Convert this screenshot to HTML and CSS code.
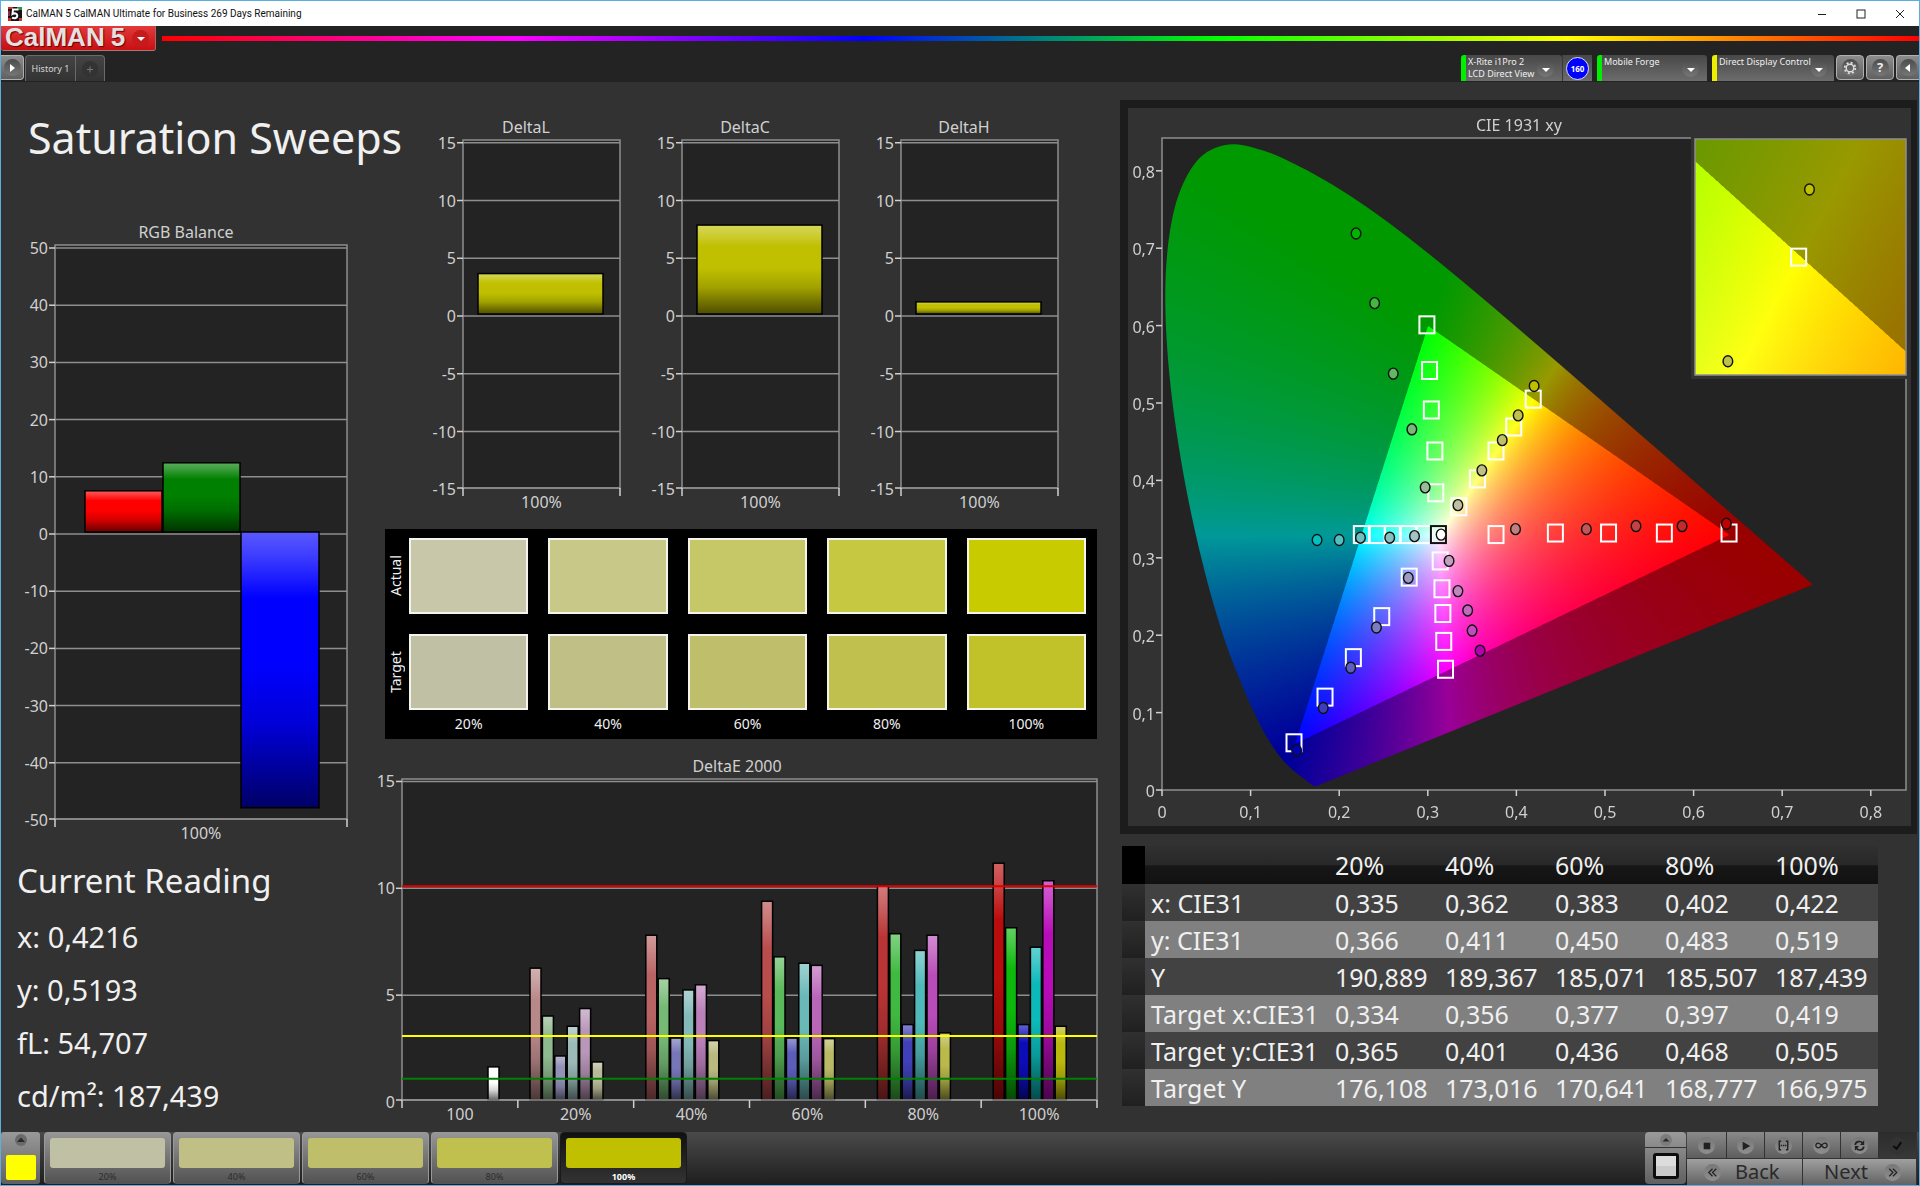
FILE: index.html
```html
<!DOCTYPE html>
<html lang="en">
<head>
<meta charset="utf-8">
<title>CalMAN 5 CalMAN Ultimate for Business 269 Days Remaining</title>
<meta name="viewport" content="width=device-width, initial-scale=1">
<link rel="stylesheet" href="styles.css">
</head>
<body>
<header class="titlebar">
  <svg class="app-icon" viewBox="0 0 14 14" aria-hidden="true">
    <rect width="14" height="14" fill="#1a1212"/>
    <path d="M0 0h5v2H0zM0 11h3v3H0z" fill="#d8291f"/><path d="M9 0h5v3H9z" fill="#2f8f4a"/><path d="M0 4h2v5H0z" fill="#8c2b52"/><path d="M11 11h3v3h-3z" fill="#b8433c"/>
    <path d="M10.500 2.500H5L4.500 7c2-1.200 4.800-.6 4.800 1.700S6.500 12 4 10.700" fill="none" stroke="#fff" stroke-width="2"/>
  </svg>
  <span class="window-title">CalMAN 5 CalMAN Ultimate for Business 269 Days Remaining</span>
  <div class="window-buttons">
    <button type="button" aria-label="Minimize"><svg viewBox="0 0 10 10"><path d="M1 5.500h8"/></svg></button>
    <button type="button" aria-label="Maximize"><svg viewBox="0 0 10 10"><rect x="1" y="1" width="8" height="8"/></svg></button>
    <button type="button" aria-label="Close"><svg viewBox="0 0 10 10"><path d="M1 1l8 8M9 1l-8 8"/></svg></button>
  </div>
</header>

<div class="brandbar">
  <button type="button" class="brand">
    <span class="brand-name">CalMAN</span><span class="brand-name">5</span>
    <span class="round round-red"><svg viewBox="0 0 16 16"><path d="M4 6h8l-4 4z" fill="#fff"/></svg></span>
  </button>
  <div class="spectrum"></div>
</div>

<nav class="toolbar">
  <button type="button" class="square-btn play" aria-label="Show panel"><span class="round"><svg viewBox="0 0 16 16"><path d="M6 4l5 4-5 4z" fill="#fff"/></svg></span></button>
  <div class="tabs">
    <button type="button" class="tab">History 1</button>
    <button type="button" class="tab-add" aria-label="Add history"><svg viewBox="0 0 16 16"><circle cx="8" cy="8" r="8" fill="#333"/><path d="M8 5.500v6M5 8.500h6" stroke="#777" fill="none"/></svg></button>
  </div>
  <div class="devices">
    <div class="device-group">
      <button type="button" class="device meter" aria-haspopup="menu"><span class="device-text">X-Rite i1Pro 2<br>LCD Direct View</span><span class="round"><svg viewBox="0 0 16 16"><path d="M4 7h8l-4 4z" fill="#fff"/></svg></span></button>
      <button type="button" class="badge-btn"><span class="badge">160</span></button>
    </div>
    <button type="button" class="device source" aria-haspopup="menu"><span class="device-text">Mobile Forge</span><span class="round"><svg viewBox="0 0 16 16"><path d="M4 7h8l-4 4z" fill="#fff"/></svg></span></button>
    <button type="button" class="device display" aria-haspopup="menu"><span class="device-text">Direct Display Control</span><span class="round"><svg viewBox="0 0 16 16"><path d="M4 7h8l-4 4z" fill="#fff"/></svg></span></button>
    <div class="tool-buttons">
      <button type="button" class="square-btn" aria-label="Settings"><span class="round"><svg viewBox="0 0 16 16"><circle cx="8" cy="8" r="3.800" fill="none" stroke="#ddd" stroke-width="1.400"/><circle cx="8" cy="8" r="5.300" fill="none" stroke="#ddd" stroke-width="1.800" stroke-dasharray="2 2.160"/></svg></span></button>
      <button type="button" class="square-btn" aria-label="Help"><span class="round question">?</span></button>
      <button type="button" class="square-btn" aria-label="Collapse"><span class="round"><svg viewBox="0 0 16 16"><path d="M10 4L5 8l5 4z" fill="#fff"/></svg></span></button>
    </div>
  </div>
</nav>

<main class="workspace">
  <section class="col-left">
    <h1>Saturation Sweeps</h1>
    <svg class="chart" id="rgb-balance" viewBox="0 0 369 636" role="img" aria-label="RGB Balance"></svg>
    <div class="reading">
      <h2>Current Reading</h2>
      <p>x: 0,4216</p>
      <p>y: 0,5193</p>
      <p>fL: 54,707</p>
      <p>cd/m²: 187,439</p>
    </div>
  </section>

  <section class="col-center">
    <div class="deltas">
      <svg class="chart" id="delta-l" viewBox="0 0 219 404" role="img" aria-label="DeltaL"></svg>
      <svg class="chart" id="delta-c" viewBox="0 0 219 404" role="img" aria-label="DeltaC"></svg>
      <svg class="chart" id="delta-h" viewBox="0 0 219 404" role="img" aria-label="DeltaH"></svg>
    </div>
    <div class="swatches">
      <div class="swatch-row">
        <span class="side">Actual</span>
        <div class="sw a20"></div><div class="sw a40"></div><div class="sw a60"></div><div class="sw a80"></div><div class="sw a100"></div>
      </div>
      <div class="swatch-row">
        <span class="side">Target</span>
        <div class="sw t20"></div><div class="sw t40"></div><div class="sw t60"></div><div class="sw t80"></div><div class="sw t100"></div>
      </div>
      <div class="swatch-row levels">
        <span></span><span>20%</span><span>40%</span><span>60%</span><span>80%</span><span>100%</span>
      </div>
    </div>
    <svg class="chart" id="delta-e" viewBox="0 0 745 380" role="img" aria-label="DeltaE 2000"></svg>
  </section>

  <section class="col-right">
    <div class="cie">
      <canvas id="cie-gamut" width="1566" height="1436"></canvas>
      <svg id="cie-marks" class="chart" viewBox="0 0 783 718" role="img" aria-label="CIE 1931 xy"></svg>
    </div>
    <table class="data">
      <thead>
        <tr><td class="handle"></td><th class="name"></th><th>20%</th><th>40%</th><th>60%</th><th>80%</th><th class="last">100%</th></tr>
      </thead>
      <tbody>
        <tr><td class="handle"></td><th class="name">x: CIE31</th><td>0,335</td><td>0,362</td><td>0,383</td><td>0,402</td><td>0,422</td></tr>
        <tr><td class="handle"></td><th class="name">y: CIE31</th><td>0,366</td><td>0,411</td><td>0,450</td><td>0,483</td><td>0,519</td></tr>
        <tr><td class="handle"></td><th class="name">Y</th><td>190,889</td><td>189,367</td><td>185,071</td><td>185,507</td><td>187,439</td></tr>
        <tr><td class="handle"></td><th class="name">Target x:CIE31</th><td>0,334</td><td>0,356</td><td>0,377</td><td>0,397</td><td>0,419</td></tr>
        <tr><td class="handle"></td><th class="name">Target y:CIE31</th><td>0,365</td><td>0,401</td><td>0,436</td><td>0,468</td><td>0,505</td></tr>
        <tr><td class="handle"></td><th class="name">Target Y</th><td>176,108</td><td>173,016</td><td>170,641</td><td>168,777</td><td>166,975</td></tr>
      </tbody>
    </table>
  </section>
</main>

<footer class="bottombar">
  <button type="button" class="color-pick" aria-label="Current color"><svg viewBox="0 0 12 12"><circle cx="6" cy="6" r="6" fill="#6a6a6a"/><path d="M2 8h8L6 3.500z" fill="#2a2a2a"/></svg><span class="color-now"></span></button>
  <div class="tiles">
    <button type="button" class="tile"><span class="chip t20"></span>20%</button>
    <button type="button" class="tile"><span class="chip t40"></span>40%</button>
    <button type="button" class="tile"><span class="chip t60"></span>60%</button>
    <button type="button" class="tile"><span class="chip t80"></span>80%</button>
    <button type="button" class="tile selected"><span class="chip t100s"></span>100%</button>
  </div>
  <div class="controls">
    <button type="button" class="pattern" aria-label="Pattern window"><span class="pattern-top"><svg viewBox="0 0 12 12"><circle cx="6" cy="6" r="6" fill="#7c7c7c"/><path d="M2.500 7.500h7L6 4z" fill="#2a2a2a"/></svg></span><span class="pattern-box"></span></button>
    <div class="transport">
      <button type="button" aria-label="Stop"><span class="disc"><svg viewBox="0 0 16 16"><path d="M5 5h7v7H5z" fill="#222"/></svg></span></button>
      <button type="button" aria-label="Play"><span class="disc"><svg viewBox="0 0 16 16"><path d="M5 4l8 4.500L5 13z" fill="#222"/></svg></span></button>
      <button type="button" aria-label="Range"><span class="disc"><svg viewBox="0 0 16 16"><path d="M5.500 3.500h-2v9h2M10.500 3.500h2v9h-2M5 8h1.500M7.300 8h1.500M9.500 8h1.500" fill="none" stroke="#222" stroke-width="1.500"/></svg></span></button>
      <button type="button" aria-label="Continuous"><span class="disc"><svg viewBox="0 0 16 16"><path d="M8 8C6.500 6 5.500 5.500 4.500 5.500a2.500 2.500 0 0 0 0 5C5.500 10.500 6.500 10 8 8s2.500-2.500 3.500-2.500a2.500 2.500 0 0 1 0 5C10.500 10.500 9.500 10 8 8z" fill="none" stroke="#222" stroke-width="1.400"/></svg></span></button>
      <button type="button" aria-label="Repeat"><span class="disc"><svg viewBox="0 0 16 16"><path d="M3.500 7.500c0-4 5.500-5 8-2M12.500 9c0 4-5.500 5-8 2" fill="none" stroke="#222" stroke-width="1.800"/><path d="M13 2.500v5H8.500zM3 13.500v-5h4.500z" fill="#222"/></svg></span></button>
      <button type="button" class="off" aria-label="Accept"><span class="disc"><svg viewBox="0 0 16 16"><path d="M3.500 8.500l3.500 3 5-7" fill="none" stroke="#0c0c0c" stroke-width="2.200"/></svg></span></button>
      <button type="button" class="wide"><span class="disc"><svg viewBox="0 0 16 16"><path d="M8 4L4 8l4 4M12 4L8 8l4 4" fill="none" stroke="#222" stroke-width="1.300"/></svg></span>Back</button>
      <button type="button" class="wide">Next<span class="disc"><svg viewBox="0 0 16 16"><path d="M4.500 4l4 4-4 4M8.500 4l4 4-4 4" fill="none" stroke="#222" stroke-width="1.300"/></svg></span></button>
    </div>
  </div>
</footer>
<script src="charts.js"></script>
</body>
</html>
```
FILE: styles.css
```css
* { box-sizing: border-box; }

body {
  margin: 0;
  min-height: 100vh;
  display: flex;
  flex-direction: column;
  background: #323232;
  border: 1px solid #5aaee0;
  font-family: "Noto Sans", "Open Sans", sans-serif;
  color: #f0f0f0;
}

button {
  font: inherit;
  color: inherit;
  border: 0;
  padding: 0;
  margin: 0;
  background: none;
}

svg { display: block; }

/* title bar */
.titlebar {
  display: flex;
  align-items: center;
  height: 25px;
  background: #fff;
  color: #111;
  padding-left: 7px;
}
.app-icon { width: 14px; height: 14px; }
.window-title { font-family: Roboto, "Noto Sans", sans-serif; font-size: 10px; line-height: 14px; margin-left: 4px; }
.window-buttons { margin-left: auto; display: flex; }
.window-buttons button { width: 39px; height: 25px; display: grid; place-items: center; }
.window-buttons svg { width: 10px; height: 10px; fill: none; stroke: #222; }

/* brand strip */
.brandbar {
  display: flex;
  gap: 6px;
  height: 27px;
  background: #232323;
}
.brand {
  display: flex;
  align-items: center;
  gap: 6px;
  width: 155px;
  height: 25px;
  padding: 0 0 3px 4px;
  background: linear-gradient(#e23a3a, #c90f12);
  border-right: 1px solid #a66;
  border-bottom: 1px solid #a77;
  border-radius: 0 0 3px 3px;
}
.brand-name {
  font-family: "Liberation Sans", Arial, sans-serif;
  font-weight: 700;
  font-size: 26px;
  line-height: 20px;
  color: #e2e2e2;
  text-shadow: 1px 1px 1px #600;
}
.round {
  display: grid;
  place-items: center;
  width: 17px;
  height: 17px;
  border-radius: 50%;
  background: linear-gradient(#4c4c4c, #777);
}
.round svg { width: 16px; height: 16px; }
.round-red { background: #c61a1c; margin: 4px 0 0 1px; }
.spectrum {
  flex: 1;
  height: 5px;
  margin-top: 10px;
  background: linear-gradient(90deg, #f00, #f0f, #00f, #0f0, #ff0, #f00);
}

/* tool bar */
.toolbar {
  display: flex;
  height: 29px;
  padding-top: 2px;
  background: #232323;
}
.square-btn {
  display: grid;
  place-items: center;
  width: 28px;
  height: 25px;
  border: 1px solid #b0b0b0;
  border-radius: 4px;
  background: linear-gradient(#8c8c8c, #606060);
}
.square-btn.play { width: 23px; border-left: 0; border-radius: 0 4px 4px 0; }
.question { font-weight: 700; font-size: 13px; line-height: 17px; color: #eee; }
.tabs { display: flex; margin-left: 1px; height: 26px; }
.tab, .tab-add {
  border: 1px solid #6a6a6a;
  border-bottom: 0;
  background: linear-gradient(#444, #333);
}
.tab { width: 50px; font-size: 9px; color: #d8d8d8; border-radius: 4px 0 0 0; border-right: 0; }
.tab-add { width: 30px; display: grid; place-items: center; border-radius: 0 4px 0 0; }
.tab-add svg { width: 16px; height: 16px; }
.devices { display: flex; margin-left: auto; }
.device-group { display: flex; }
.device {
  display: flex;
  align-items: flex-start;
  justify-content: space-between;
  height: 26px;
  padding: 1px 8px 0 2px;
  border-left: 5px solid #0e0;
  border-radius: 3px 3px 0 0;
  background: linear-gradient(#484848, #6c6c6c);
  text-align: left;
}
.device-text { font-size: 9px; line-height: 12px; white-space: nowrap; }
.device .round { margin-top: 4px; }
.device.meter { width: 101px; }
.device.source { width: 110px; margin-left: 5px; }
.device.display { width: 122px; margin-left: 5px; border-left-color: #ee0; }
.badge-btn {
  width: 30px;
  height: 26px;
  display: grid;
  place-items: center;
  background: linear-gradient(#484848, #6c6c6c);
  border-left: 1px solid #383838;
}
.badge {
  width: 23px;
  height: 23px;
  border-radius: 50%;
  border: 1px solid #dde;
  background: #00f;
  color: #fff;
  font-size: 8px;
  font-weight: 700;
  line-height: 21px;
}
.tool-buttons { display: flex; gap: 2px; margin-left: 2px; }
.tool-buttons .square-btn:last-child { width: 23px; border-right: 0; border-radius: 4px 0 0 4px; }

/* workspace */
.workspace {
  flex: 1;
  display: grid;
  grid-template-columns: minmax(0, 369fr) minmax(0, 745fr) minmax(0, 804fr);
  align-items: start;
  padding-top: 1px;
}
.chart { width: 100%; height: auto; }
.chart text { font-size: 16px; fill: #d0d0d0; }

h1 {
  margin: 26px 0 49px 27px;
  font-size: 43px;
  line-height: 58px;
  font-weight: 400;
  white-space: nowrap;
}
.reading { padding-left: 16px; }
.reading h2 {
  margin: 6px 0;
  font-size: 33px;
  line-height: 46px;
  font-weight: 400;
}
.reading p { margin: 0; font-size: 29px; line-height: 53px; }

.deltas { display: flex; padding: 30px 34px 0 54px; }
.deltas .chart { flex: 1; min-width: 0; }

/* actual and target swatches */
.swatches {
  display: flex;
  flex-direction: column;
  gap: 20px;
  margin: 12px 18px 0 15px;
  padding: 9px 11px 0 0;
  background: #000;
  font-size: 14px;
}
.swatch-row {
  display: grid;
  grid-template-columns: 4px repeat(5, minmax(0, 1fr));
  column-gap: 20px;
  height: 76px;
  text-align: center;
}
.levels { height: 29px; line-height: 28px; margin-top: -20px; }
.side { writing-mode: vertical-rl; transform: rotate(180deg); width: 22px; line-height: 22px; }
.sw { border: 2px solid #f4f4ec; }
.a20 { background: #c8c7aa; } .a40 { background: #c8c888; } .a60 { background: #c6c766; }
.a80 { background: #c6c842; } .a100 { background: #c8cb00; }
.t20 { background: #c0c0a5; } .t40 { background: #c0bf86; } .t60 { background: #bfbf6b; }
.t80 { background: #bfc04d; } .t100 { background: #c1c12a; } .t100s { background: #c0c000; }
#delta-e { margin-top: 11px; }

.cie {
  display: grid;
  margin: 17px 2px 0 5px;
  border: 8px solid #1c1c1c;
  border-right-width: 6px;
}
.cie > * { grid-area: 1 / 1; width: 100%; height: auto; }

.data {
  width: 756px;
  max-width: 100%;
  margin: 12px 0 0 7px;
  border-collapse: collapse;
  table-layout: fixed;
  font-size: 25px;
  line-height: 30px;
}
.data td, .data th { padding: 0; height: 37px; font-weight: 400; text-align: left; }
.data thead th { width: 110px; height: 38px; background: linear-gradient(#303030 0, #282828 50%, #171717 52%, #111 100%); }
.data thead .last { width: 103px; }
.data .handle { width: 23px; background: linear-gradient(#303030, #202020); }
.data thead .handle { background: #000; }
.data thead .name { width: 190px; }
.data .name { padding-left: 6px; }
.data tbody tr:nth-child(odd) { background: #424242; }
.data tbody tr:nth-child(even) { background: #808080; }

/* bottom bar */
.bottombar {
  display: flex;
  height: 53px;
  background: linear-gradient(#4a4a4a, #1e1e1e);
}
.color-pick {
  width: 39px;
  height: 52px;
  display: flex;
  flex-direction: column;
  align-items: center;
  gap: 9px;
  padding-top: 2px;
  border-radius: 3px;
  background: linear-gradient(#999, #606060);
}
.color-pick svg { width: 12px; height: 12px; }
.color-now { width: 30px; height: 25px; border-radius: 2px; background: #ff0; }
.tiles { display: flex; gap: 2px; margin-left: 4px; }
.tile {
  width: 127px;
  height: 52px;
  padding: 5px 5px 0;
  border: 1px solid #999;
  border-bottom-color: #555;
  border-radius: 4px;
  background: linear-gradient(#969696, #525252);
  font-size: 9px;
  line-height: 16px;
  color: #2c2c2c;
}
.tile.selected { background: linear-gradient(#111, #333); border-color: #1a1a1a; color: #fff; font-weight: 700; }
.chip { display: block; height: 30px; border-radius: 3px; margin-bottom: 1px; }
.controls { display: flex; margin-left: auto; gap: 1px; }
.pattern {
  width: 41px;
  height: 52px;
  display: flex;
  flex-direction: column;
  align-items: center;
  border-radius: 4px;
  background: linear-gradient(#9a9a9a, #606060);
}
.pattern-top { width: 41px; height: 16px; display: grid; place-items: center; border-bottom: 1px solid #333; }
.pattern-top svg { width: 12px; height: 12px; }
.pattern-box { width: 26px; height: 26px; margin-top: 5px; border: 3px solid #0c0c0c; border-radius: 3px; background: linear-gradient(#dcdcdc 50%, #cacaca 50%); }
.transport {
  display: grid;
  grid-template-columns: 40px repeat(5, 38px);
  grid-template-rows: 26px 26px;
  gap: 1px 0;
  padding-right: 2px;
}
.transport button {
  display: flex;
  align-items: center;
  justify-content: center;
  border-right: 1px solid #333;
  background: linear-gradient(#8a8a8a, #5e5e5e);
}
.transport .off { background: linear-gradient(#2c2c2c, #383838); }
.transport .off .disc { background: #333; }
.transport .wide {
  grid-column: span 3;
  gap: 14px;
  font-size: 20px;
  line-height: 24px;
  color: #2a2a2a;
  background: linear-gradient(#a0a0a0, #626262);
}
.transport .wide:last-child { justify-content: flex-end; gap: 16px; padding-right: 15px; }
.transport .wide:nth-last-child(2) { justify-content: flex-start; padding-left: 17px; }
.disc { display: grid; place-items: center; width: 17px; height: 17px; border-radius: 50%; background: linear-gradient(#777, #8f8f8f); }
.disc svg { width: 15px; height: 15px; }
```
FILE: charts.js
```js
const NS = "http://www.w3.org/2000/svg";
const AXIS = "#8e8e8e";
const TICK = "#d0d0d0";

function add(parent, name, attrs, text) {
  const el = document.createElementNS(NS, name);
  for (const key in attrs) el.setAttribute(key, attrs[key]);
  if (text !== undefined) el.textContent = text;
  parent.appendChild(el);
  return el;
}

function line(svg, x1, y1, x2, y2, stroke, width) {
  add(svg, "line", { x1, y1, x2, y2, stroke, "stroke-width": width || 1.5 });
}

function addGloss(svg) {
  const defs = add(svg, "defs", {});
  const g = add(defs, "linearGradient", { id: svg.id + "-gloss", x1: 0, y1: 0, x2: 0, y2: 1 });
  [[0, "#fff", 0.35], [0.08, "#fff", 0.25], [0.24, "#fff", 0], [0.48, "#000", 0], [0.7, "#000", 0.16], [1, "#000", 0.6]]
    .forEach(([offset, color, opacity]) =>
      add(g, "stop", { offset, "stop-color": color, "stop-opacity": opacity }));
}

function barChart(id, c) {
  const svg = document.getElementById(id);
  addGloss(svg);
  const y = v => c.zero - v * c.unit;
  add(svg, "rect", {
    x: c.left, y: c.top, width: c.right - c.left, height: c.bottom - c.top,
    fill: "#232323", stroke: AXIS, "stroke-width": 1.5
  });
  c.labels.forEach(v => {
    const gy = Math.min(y(v), c.bottom);
    line(svg, c.left, gy, c.right, gy, AXIS);
    line(svg, c.left - 6, gy, c.left, gy, TICK);
    add(svg, "text", { x: c.left - 7, y: y(v) + 6, "text-anchor": "end" }, v);
  });
  c.bars.forEach(([x, w, v, fill]) => {
    const base = c.zero - c.lift;
    const h = Math.abs(v) * c.unit;
    const top = v > 0 ? base - h : base;
    add(svg, "rect", { x, y: top, width: w, height: h, fill });
    add(svg, "rect", { x, y: top, width: w, height: h, fill: `url(#${id}-gloss)`, stroke: "#000", "stroke-width": 1.5 });
  });
  (c.limits || []).forEach(([v, color]) => {
    line(svg, c.left, y(v) - c.lift, c.right, y(v) - c.lift, color, 2);
  });
  if (c.lift && c.limits) line(svg, c.left, c.bottom, c.right, c.bottom, AXIS);
  const step = (c.right - c.left) / c.categories.length;
  c.categories.forEach((name, i) => {
    add(svg, "text", { x: c.left + step * (i + 0.5), y: c.bottom + 20, "text-anchor": "middle" }, name);
  });
  for (let i = 0; i <= c.categories.length; i++) {
    line(svg, c.left + step * i, c.bottom, c.left + step * i, c.bottom + 8, TICK);
  }
  add(svg, "text", { x: c.titleX, y: c.top - 7, "text-anchor": "middle" }, c.title);
}

barChart("rgb-balance", {
  title: "RGB Balance", titleX: 185, left: 54, right: 346, top: 29, bottom: 603,
  zero: 318, unit: 5.72, lift: 2,
  labels: [50, 40, 30, 20, 10, 0, -10, -20, -30, -40, -50],
  categories: ["100%"],
  bars: [[84, 77, 7.2, "#f00"], [162, 77, 12.1, "#008000"], [240, 78, -48.2, "#00f"]]
});

[["delta-l", "DeltaL", 3.5], ["delta-c", "DeltaC", 7.7], ["delta-h", "DeltaH", 1.05]].forEach(([id, title, v]) => {
  barChart(id, {
    title, titleX: 102, left: 39, right: 196, top: 27, bottom: 375,
    zero: 203, unit: 11.55, lift: 2,
    labels: [15, 10, 5, 0, -5, -10, -15],
    categories: ["100%"],
    bars: [[54, 125, v, "#c0c000"]]
  });
});

const sweep = [
  [["#b98888", 6.17], ["#8fb98f", 3.93], ["#9292b9", 2.06], ["#9bb9b9", 3.45], ["#b997b9", 4.28], ["#b9b99a", 1.78]],
  [["#b96464", 7.71], ["#75b975", 5.68], ["#7676b9", 2.9], ["#84b9b9", 5.15], ["#b980b9", 5.39], ["#b9b980", 2.78]],
  [["#b94c4c", 9.3], ["#5ab95a", 6.7], ["#5c5cb9", 2.9], ["#6ab9b9", 6.4], ["#b966b9", 6.3], ["#b9b966", 2.87]],
  [["#b93434", 10], ["#3fb93f", 7.78], ["#4040b9", 3.53], ["#50b9b9", 7], ["#b94cb9", 7.71], ["#b9b94c", 3.14]],
  [["#b90c0c", 11.08], ["#0cb90c", 8.06], ["#0c0cb9", 3.53], ["#0cb9b9", 7.15], ["#b90cb9", 10.26], ["#b9b90c", 3.45]]
];
const eBars = [[118, 11, 1.55, "#fff"]];
sweep.forEach((group, i) => group.forEach(([color, v], j) => {
  eBars.push([160 + i * 115.8 + j * 12.4, 11, v, color]);
}));
barChart("delta-e", {
  title: "DeltaE 2000", titleX: 367, left: 32, right: 727, top: 29, bottom: 350,
  zero: 352, unit: 21.37, lift: 2,
  labels: [15, 10, 5, 0],
  categories: ["100", "20%", "40%", "60%", "80%", "100%"],
  bars: eBars,
  limits: [[10, "#e00000"], [3, "#ff0"], [1, "#008000"]]
});

/* CIE 1931 chromaticity diagram */
const LOCUS = [
  [0.1741, 0.005], [0.1733, 0.0048], [0.1714, 0.0051], [0.1689, 0.0069], [0.1644, 0.0109], [0.1566, 0.0177],
  [0.1510, 0.0227], [0.1440, 0.0297], [0.1355, 0.0399], [0.1241, 0.0578], [0.1096, 0.0868], [0.0913, 0.1327],
  [0.0687, 0.2007], [0.0454, 0.2950], [0.0235, 0.4127], [0.0082, 0.5384], [0.0039, 0.6548], [0.0139, 0.7502],
  [0.0389, 0.8120], [0.0743, 0.8338], [0.1142, 0.8262], [0.1547, 0.8059], [0.1929, 0.7816], [0.2296, 0.7543],
  [0.2658, 0.7243], [0.3016, 0.6923], [0.3373, 0.6589], [0.3731, 0.6245], [0.4087, 0.5896], [0.4441, 0.5547],
  [0.4788, 0.5202], [0.5125, 0.4866], [0.5448, 0.4544], [0.5752, 0.4242], [0.6029, 0.3965], [0.6270, 0.3725],
  [0.6482, 0.3514], [0.6658, 0.3340], [0.6801, 0.3197], [0.6915, 0.3083], [0.7079, 0.2920], [0.7190, 0.2809],
  [0.7347, 0.2653]
];
const plot = { x: 34, y: 30, w: 744, h: 652, x0: 0, y0: 0, sx: 886, sy: 774 };
const inset = { x: 567, y: 31, w: 211, h: 236, x0: 0.3941, y0: 0.4801, sx: 4163, sy: 4733 };
const px = (v, x) => v.x + (x - v.x0) * v.sx;
const py = (v, y) => v.y + v.h - (y - v.y0) * v.sy;

function paintGamut(ctx, view, scale) {
  const w = view.w * scale, h = view.h * scale;
  const layer = document.createElement("canvas");
  layer.width = w;
  layer.height = h;
  const lctx = layer.getContext("2d");
  const image = lctx.createImageData(w, h);
  for (let j = 0, k = 0; j < h; j++) {
    const y = view.y0 + (h - j) / scale / view.sy;
    for (let i = 0; i < w; i++, k += 4) {
      const x = view.x0 + i / scale / view.sx;
      const z = 1 - x - y;
      const r = 3.2406 * x - 1.5372 * y - 0.4986 * z;
      const g = -0.9689 * x + 1.8758 * y + 0.0415 * z;
      const b = 0.0557 * x - 0.2040 * y + 1.0570 * z;
      const level = (r < 0 || g < 0 || b < 0 ? 153 : 255) / Math.max(r, g, b);
      image.data[k] = Math.max(0, r) * level;
      image.data[k + 1] = Math.max(0, g) * level;
      image.data[k + 2] = Math.max(0, b) * level;
      image.data[k + 3] = 255;
    }
  }
  lctx.putImageData(image, 0, 0);
  ctx.drawImage(layer, view.x, view.y, view.w, view.h);
}

function smoothLocus(ctx) {
  const p = LOCUS.map(([x, y]) => [px(plot, x), py(plot, y)]);
  ctx.beginPath();
  ctx.moveTo(p[0][0], p[0][1]);
  for (let i = 0; i < p.length - 1; i++) {
    const a = p[Math.max(0, i - 1)], b = p[i], c = p[i + 1], d = p[Math.min(p.length - 1, i + 2)];
    ctx.bezierCurveTo(b[0] + (c[0] - a[0]) / 6, b[1] + (c[1] - a[1]) / 6,
      c[0] - (d[0] - b[0]) / 6, c[1] - (d[1] - b[1]) / 6, c[0], c[1]);
  }
  ctx.closePath();
}

const ctx = document.getElementById("cie-gamut").getContext("2d");
ctx.scale(2, 2);
ctx.fillStyle = "#232323";
ctx.fillRect(plot.x, plot.y, plot.w, plot.h);
ctx.save();
smoothLocus(ctx);
ctx.clip();
paintGamut(ctx, plot, 2);
ctx.restore();
ctx.fillStyle = "#323232";
ctx.fillRect(563, 26, 220, 245);
paintGamut(ctx, inset, 2);

const cie = document.getElementById("cie-marks");
add(cie, "path", { d: "M563 30H34V682H778V271", fill: "none", stroke: AXIS, "stroke-width": 1.5 });
add(cie, "rect", { x: 567, y: 31, width: 211, height: 236, fill: "none", stroke: AXIS, "stroke-width": 1.5 });
add(cie, "text", { x: 391, y: 23, "text-anchor": "middle" }, "CIE 1931 xy");
for (let i = 0; i <= 8; i++) {
  const label = i ? "0," + i : "0";
  const gx = px(plot, i / 10), gy = py(plot, i / 10);
  line(cie, gx, 682, gx, 688, TICK);
  line(cie, 28, gy, 34, gy, TICK);
  add(cie, "text", { x: gx, y: 710, "text-anchor": "middle" }, label);
  add(cie, "text", { x: 27, y: gy + 7, "text-anchor": "end" }, label);
}

function target(view, x, y, stroke) {
  add(cie, "rect", { x: px(view, x) - 7.5, y: py(view, y) - 8.5, width: 15, height: 17, fill: "none", stroke: stroke || "#fff", "stroke-width": 2 });
}
function reading(view, x, y, fill) {
  add(cie, "ellipse", { cx: px(view, x), cy: py(view, y), rx: 4.8, ry: 5.5, fill, stroke: "#111", "stroke-width": 1.4 });
}

[
  [0.299, 0.601], [0.302, 0.542], [0.304, 0.491], [0.308, 0.438], [0.309, 0.384],
  [0.419, 0.505], [0.397, 0.469], [0.377, 0.438], [0.356, 0.402], [0.335, 0.366],
  [0.377, 0.33], [0.444, 0.332], [0.504, 0.332], [0.567, 0.332], [0.64, 0.332],
  [0.225, 0.33], [0.243, 0.33], [0.26, 0.33], [0.278, 0.33], [0.296, 0.33],
  [0.314, 0.296], [0.316, 0.26], [0.317, 0.228], [0.318, 0.192], [0.32, 0.156],
  [0.279, 0.275], [0.248, 0.224], [0.216, 0.171], [0.184, 0.12], [0.149, 0.061]
].forEach(([x, y]) => target(plot, x, y));
target(plot, 0.312, 0.33, "#111");

[
  [0.219, 0.719, "#00b400"], [0.24, 0.629, "#3fb93f"], [0.261, 0.538, "#62b862"], [0.282, 0.466, "#78b878"], [0.297, 0.391, "#98bc98"],
  [0.42, 0.522, "#c0c000"], [0.402, 0.484, "#c0c04d"], [0.384, 0.452, "#c0c06b"], [0.361, 0.413, "#c0c086"], [0.334, 0.368, "#c0c0a5"],
  [0.399, 0.337, "#c08080"], [0.479, 0.337, "#c05858"], [0.535, 0.341, "#c04444"], [0.587, 0.341, "#c02c2c"], [0.637, 0.344, "#c00000"],
  [0.175, 0.323, "#00c0c0"], [0.2, 0.323, "#50c0c0"], [0.224, 0.326, "#70c0c0"], [0.257, 0.326, "#88c0c0"], [0.285, 0.328, "#a4c4c4"],
  [0.315, 0.33, "#fff"],
  [0.324, 0.296, "#c0a0c0"], [0.334, 0.257, "#c086c0"], [0.345, 0.232, "#c06bc0"], [0.35, 0.206, "#c04dc0"], [0.359, 0.18, "#b400b4"],
  [0.278, 0.274, "#9c9cc4"], [0.242, 0.21, "#7c7cc0"], [0.213, 0.158, "#5e5ec0"], [0.182, 0.106, "#3c3cc0"], [0.152, 0.051, "#0000b4"]
].forEach(([x, y, fill]) => reading(plot, x, y, fill));

target(inset, 0.419, 0.505);
reading(inset, 0.4216, 0.5193, "#c0c000");
reading(inset, 0.402, 0.483, "#c0c04d");
```
